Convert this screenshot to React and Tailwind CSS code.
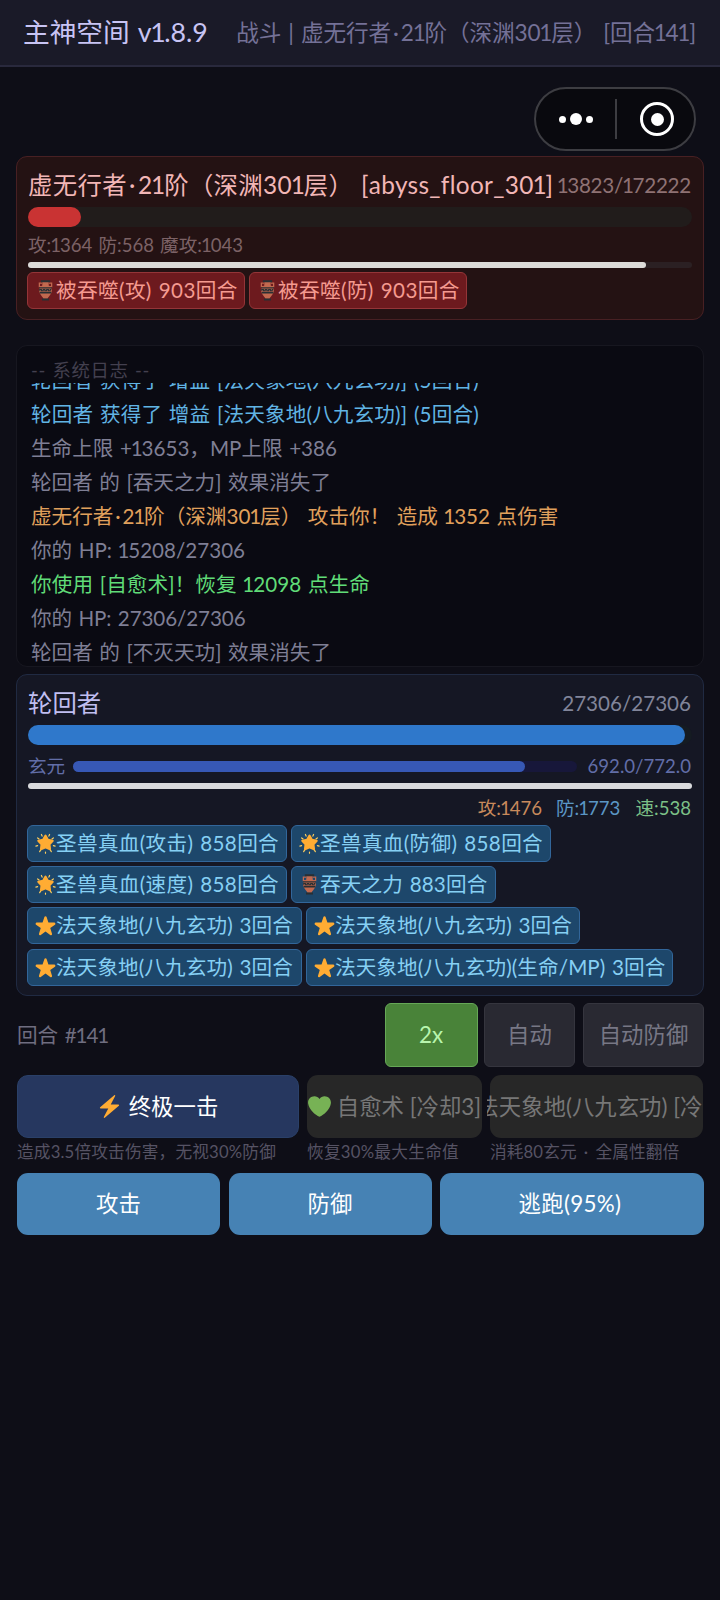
const Glow = () => (
  <svg viewBox="0 0 36 36" className="w-[21px] h-[21px] shrink-0">
    <g stroke="#ffcf5e" strokeWidth="2" strokeLinecap="round">
      <path d="M18 32.500v2.200M4.500 8.500L7 10.300M31.500 8.500L29 10.300M1.500 22.500l3-.8M34.500 22.500l-3-.8M8 32l1.800-3M28 32l-1.800-3M11 2.500l1.200 2.800M25 2.500l-1.200 2.800" />
    </g>
    <path fill="#ffac33" stroke="#ffac33" strokeWidth="3.500" strokeLinejoin="round" d="M18 4.500l4.200 7 8.200 1.700-5.600 6.300 1 8.300-7.800-3.300-7.800 3.300 1-8.300-5.600-6.300 8.200-1.700z" />
  </svg>
);

const Star = () => (
  <svg viewBox="0 0 36 36" className="w-[21px] h-[21px] shrink-0">
    <path fill="#ffac33" d="M27.287 34.627c-.404 0-.806-.124-1.152-.371L18 28.422l-8.135 5.834a1.970 1.970 0 0 1-2.312-.008 1.971 1.971 0 0 1-.721-2.194l3.034-9.792-8.062-5.681a1.980 1.980 0 0 1-.708-2.203 1.978 1.978 0 0 1 1.866-1.363L12.947 13l3.179-9.549a1.976 1.976 0 0 1 3.749 0L23 13l10.036.015a1.975 1.975 0 0 1 1.159 3.566l-8.062 5.681 3.034 9.792a1.970 1.970 0 0 1-.72 2.194 1.957 1.957 0 0 1-1.160.379z" />
  </svg>
);

const Amphora = () => (
  <svg viewBox="0 0 36 36" className="w-[21px] h-[21px] shrink-0">
    <path fill="none" stroke="#c1694f" strokeWidth="2.200" d="M12 5.500H7.500v6h4M24 5.500h4.500v6h-4" />
    <path fill="#c1694f" d="M12.500 3h11v6.500c4 2 5.500 5 5.500 8.500 0 6-5 9-7.500 14h-7C12 27 7 24 7 18c0-3.500 1.500-6.500 5.500-8.500z" />
    <path fill="#292f33" d="M10 .5h16V4H10zM7.500 12.500h21l.5 2H7zM7.500 20h21l-1 3h-19zM12 31.500h12V35H12z" />
    <path fill="none" stroke="#292f33" strokeWidth="1.800" d="M8 18.500v-2h3v2h3v-2h3v2h3v-2h3v2h3v-2h2" />
  </svg>
);

const Bolt = () => (
  <svg viewBox="0 0 36 36" className="w-[23px] h-[23px] shrink-0">
    <path fill="#ffac33" d="M32.938 15.651A1 1 0 0 0 32 15H19.925L26.890 1.458a1 1 0 0 0-.254-1.230 1 1 0 0 0-1.255.017L3.341 19.244A1 1 0 0 0 4 21h12.075L9.110 34.542a1 1 0 0 0 1.509 1.213l22.040-19a.999.999 0 0 0 .279-1.104z" />
  </svg>
);

const Heart = () => (
  <svg viewBox="0 0 36 36" className="w-[23px] h-[23px] shrink-0">
    <path fill="#77b255" d="M35.885 11.833c0-5.450-4.418-9.868-9.867-9.868-3.308 0-6.227 1.633-8.018 4.129-1.791-2.496-4.710-4.129-8.017-4.129-5.450 0-9.868 4.417-9.868 9.868 0 .772.098 1.520.266 2.241C1.751 22.587 11.216 31.568 18 34.034c6.783-2.466 16.249-11.447 17.617-19.959.170-.721.268-1.469.268-2.242z" />
  </svg>
);

const icons = { glow: Glow, star: Star, amphora: Amphora };

// narrow "1" and wide middle dot
const Text = ({ children, className = "" }) => (
  <span className={className}>
    {children.split(/([1·])/).map((part, i) => {
      if (part === "1") return <span key={i} className="-mx-[0.055em]">1</span>;
      if (part === "·") return <span key={i} className="mx-[0.09em]">·</span>;
      return part;
    })}
  </span>
);

const logs = [
  { color: "text-[#61b4e4] tracking-[0.15px]", text: "轮回者 获得了 增益 [法天象地(八九玄功)] (5回合)" },
  { color: "text-[#61b4e4] tracking-[0.15px]", text: "轮回者 获得了 增益 [法天象地(八九玄功)] (5回合)" },
  { color: "text-[#7f7f95]", text: "生命上限 +13653，MP上限 +386" },
  { color: "text-[#7f7f95]", text: "轮回者 的 [吞天之力] 效果消失了" },
  { color: "text-[#e0a05c]", text: "虚无行者·21阶（深渊301层） 攻击你！ 造成 1352 点伤害" },
  { color: "text-[#7f7f95]", text: "你的 HP: 15208/27306" },
  { color: "text-[#60dc78] tracking-[0.1px]", text: "你使用 [自愈术]！恢复 12098 点生命" },
  { color: "text-[#7f7f95] tracking-[-0.1px]", text: "你的 HP: 27306/27306" },
  { color: "text-[#7f7f95]", text: "轮回者 的 [不灭天功] 效果消失了" },
];

const buffs = [
  { icon: "glow", text: "圣兽真血(攻击) 858回合", width: "w-[260px] tracking-[0.35px]" },
  { icon: "glow", text: "圣兽真血(防御) 858回合", width: "w-[260px] tracking-[0.35px]" },
  { icon: "glow", text: "圣兽真血(速度) 858回合", width: "w-[260px] tracking-[0.35px]" },
  { icon: "amphora", text: "吞天之力 883回合", width: "w-[205px] tracking-[0.15px]" },
  { icon: "star", text: "法天象地(八九玄功) 3回合", width: "w-[275px] tracking-[0.1px]" },
  { icon: "star", text: "法天象地(八九玄功) 3回合", width: "w-[274px] tracking-[0.1px]" },
  { icon: "star", text: "法天象地(八九玄功) 3回合", width: "w-[275px] tracking-[0.1px]" },
  { icon: "star", text: "法天象地(八九玄功)(生命/MP) 3回合", width: "w-[367px] tracking-[0.1px]" },
];

const Chip = ({ icon, text, width, tone }) => {
  const Icon = icons[icon];
  return (
    <div className={`flex items-center h-[37px] pl-[7px] border-[1.5px] rounded-[6px] text-[20.6px] ${width} ${tone}`}>
      <Icon />
      <span>{text}</span>
    </div>
  );
};

const Header = () => (
  <header className="flex items-center justify-between h-[67px] pl-[23px] pr-6 bg-[#1a1a28] border-b-2 border-[#29293d]">
    <h1 className="text-[26.7px] text-[#c8c4f4]"><Text>主神空间 v1.8.9</Text></h1>
    <Text className="text-[22.6px] tracking-[-0.08px] text-[#747197]">战斗 | 虚无行者·21阶（深渊301层） [回合141]</Text>
  </header>
);

const Capsule = () => (
  <div className="absolute top-[87px] right-6 flex items-center w-[162px] h-[64px] bg-[#09090e] border-2 border-[#3d3d42] rounded-full">
    <div className="flex w-[79px] items-center justify-center gap-1">
      <i className="size-[7px] rounded-full bg-white" />
      <i className="size-[12px] rounded-full bg-white" />
      <i className="size-[7px] rounded-full bg-white" />
    </div>
    <div className="w-[2px] h-10 bg-[#3d3d42]" />
    <div className="flex flex-1 items-center justify-center pl-[3px]">
      <div className="flex items-center justify-center size-[34px] border-[3.5px] border-white rounded-full">
        <i className="size-[13px] rounded-full bg-white" />
      </div>
    </div>
  </div>
);

const EnemyPanel = () => (
  <section className="h-[164px] mt-[89px] pt-[10px] px-[11px] bg-[#241213] border-[1.5px] border-[#482023] rounded-[11px]">
    <div className="flex items-center justify-between h-9 mr-px">
      <Text className="text-[24.4px] tracking-[0.32px] text-[#f2b6b6]">虚无行者·21阶（深渊301层） [abyss_floor_301]</Text>
      <Text className="text-[20.6px] tracking-[-0.25px] text-[#8f7274]">13823/172222</Text>
    </div>
    <div className="h-5 mt-[4px] bg-[#211c1b] rounded-full">
      <div className="w-[8%] h-full bg-[#c93333] rounded-full" />
    </div>
    <div className="h-[35px] leading-[36px] text-[18.6px] text-[#7c6266]"><Text>攻:1364 防:568 魔攻:1043</Text></div>
    <div className="h-[6px] bg-[#2b2023] rounded-full">
      <div className="w-[93%] h-full bg-[#dddbd9] rounded-full" />
    </div>
    <div className="flex gap-1 mt-1 -ml-px">
      <Chip icon="amphora" text="被吞噬(攻) 903回合" width="w-[218px] tracking-[0.4px]" tone="bg-[#6d1a1e] border-[#943538] text-[#f59a90]" />
      <Chip icon="amphora" text="被吞噬(防) 903回合" width="w-[218px] tracking-[0.4px]" tone="bg-[#6d1a1e] border-[#943538] text-[#f59a90]" />
    </div>
  </section>
);

const BattleLog = () => (
  <section className="flex flex-col h-[322px] mt-[25px] px-[14px] bg-[#0a0a12] border-[1.5px] border-[#171720] rounded-[11px] overflow-hidden">
    <div className="h-[37px] pt-[7px] leading-[34px] text-[18.4px] tracking-[0.6px] text-[#43404f]">-- 系统日志 --</div>
    <div className="flex-1 overflow-hidden">
      <div className="-mt-[20px]">
        {logs.map((log, i) => (
          <p key={i} className={`h-[34px] leading-[34px] text-[20.6px] whitespace-nowrap ${log.color}`}>
            <Text>{log.text}</Text>
          </p>
        ))}
      </div>
    </div>
  </section>
);

const PlayerPanel = () => (
  <section className="h-[322px] mt-[7px] pt-[10px] px-[11px] bg-[#151724] border-[1.5px] border-[#202a42] rounded-[11px]">
    <div className="flex items-center justify-between h-[37px] mr-px">
      <span className="text-[24.4px] text-[#c0bef0]">轮回者</span>
      <span className="text-[20.6px] text-[#81859a]">27306/27306</span>
    </div>
    <div className="h-5 mt-[3px] bg-[#151b22] rounded-full">
      <div className="w-[99%] h-full bg-[#2f78cb] rounded-full" />
    </div>
    <div className="flex items-center h-[38px] pt-[5px] mr-px text-[18.6px] text-[#626ea8]">
      <span className="w-[45px]">玄元</span>
      <div className="flex-1 h-[11px] bg-[#17173a] rounded-full">
        <div className="w-[89.600%] h-full bg-[#3758b5] rounded-full" />
      </div>
      <span className="w-[114px] text-right">692.0/772.0</span>
    </div>
    <div className="h-[6px] bg-[#d9dadd] rounded-full" />
    <div className="flex justify-end gap-[14px] h-[36px] leading-[38px] mr-px text-[18.6px]">
      <Text className="text-[#c88a5c]">攻:1476</Text>
      <Text className="text-[#5b96c4]">防:1773</Text>
      <Text className="text-[#7cc087] ml-px">速:538</Text>
    </div>
    <div className="flex flex-wrap gap-x-1 gap-y-[4.200px] -mx-px">
      {buffs.map((b, i) => (
        <Chip key={i} {...b} tone="bg-[#1d476b] border-[#32669a] text-[#86d0f4]" />
      ))}
    </div>
  </section>
);

const Controls = () => (
  <div className="flex items-center mt-[7px] h-16 text-[22.4px]">
    <Text className="flex-1 pl-px text-[20.600px] text-[#6f6d80]">回合 #141</Text>
    <button className="w-[93px] h-full bg-[#498339] border-[1.5px] border-[#66a857] rounded-[6px] text-[#b8f5ae]">2x</button>
    <button className="w-[91px] h-full ml-[6.500px] bg-[#292932] border-[1.5px] border-[#35353e] rounded-[6px] text-[#777785]">自动</button>
    <button className="w-[121px] h-full ml-2 bg-[#292932] border-[1.5px] border-[#35353e] rounded-[6px] text-[#777785]">自动防御</button>
  </div>
);

const Skills = () => (
  <div className="flex gap-2 mt-2 pl-px whitespace-nowrap">
    <div className="w-[282px]">
      <button className="flex items-center justify-center gap-[8px] w-full h-[63px] bg-[#26375f] border border-[#2a4068] rounded-[11px] text-[22.4px] text-white">
        <Bolt />终极一击
      </button>
      <p className="h-[35px] leading-[29px] text-[16.700px] tracking-[0.15px] text-[#565364]">造成3.5倍攻击伤害，无视30%防御</p>
    </div>
    <div className="w-[175px]">
      <button className="flex items-center justify-center gap-[6px] w-full h-[63px] bg-[#272727] rounded-[11px] text-[22.4px] text-[#777777] overflow-hidden">
        <Heart />自愈术 [冷却3]
      </button>
      <p className="h-[35px] leading-[29px] text-[16.700px] tracking-[0.25px] text-[#565364]">恢复30%最大生命值</p>
    </div>
    <div className="w-[213px]">
      <button className="flex items-center justify-center gap-[7px] w-full h-[63px] bg-[#272727] rounded-[11px] text-[22.4px] text-[#777777] [clip-path:inset(0_0_0_-3px)]">
        <Star />法天象地(八九玄功) [冷却3]
      </button>
      <p className="h-[35px] leading-[29px] text-[16.700px] tracking-[0.1px] text-[#565364]"><Text>消耗80玄元 · 全属性翻倍</Text></p>
    </div>
  </div>
);

const Actions = () => (
  <div className="flex gap-[8.500px] h-[62px] pl-px text-[22.4px] text-white">
    <button className="w-[203px] bg-[#4682b4] rounded-[11px]">攻击</button>
    <button className="w-[203px] bg-[#4682b4] rounded-[11px]">防御</button>
    <button className="flex-1 pr-1 bg-[#4682b4] rounded-[11px] tracking-[0.3px]">逃跑(95%)</button>
  </div>
);

const App = () => (
  <div className="relative w-[720px] h-[1600px] bg-[#0e0e17] font-[Lato,'Noto_Sans_CJK_SC',sans-serif] [word-spacing:0.08em] whitespace-nowrap overflow-hidden">
    <Header />
    <main className="px-4">
      <EnemyPanel />
      <BattleLog />
      <PlayerPanel />
      <Controls />
      <Skills />
      <Actions />
    </main>
    <Capsule />
  </div>
);

export default App;
